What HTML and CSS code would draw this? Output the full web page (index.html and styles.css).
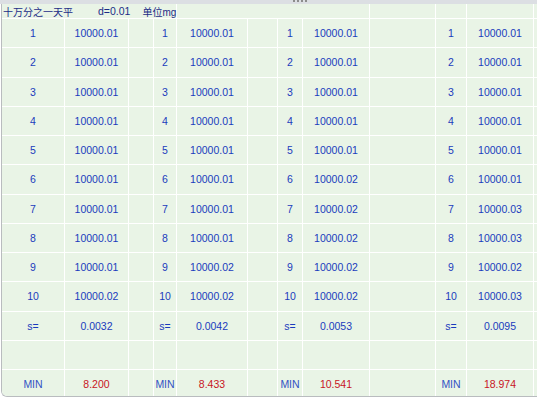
FILE: index.html
```html
<!DOCTYPE html>
<html>
<head>
<meta charset="utf-8">
<link rel="stylesheet" href="styles.css">
</head>
<body>
<div class="topbar"><div class="grip"><i></i><i></i><i></i><i></i></div></div>
<div class="sheet">
  <div class="c title span4"><span>十万分之一天平</span><span class="d">d=0.01</span><span class="u">单位mg</span></div>
  <div class="c span4"></div><div class="c"></div><div class="c"></div><div class="c"></div><div class="c"></div>

  <div class="c">1</div><div class="c">10000.01</div><div class="c"></div><div class="c">1</div><div class="c">10000.01</div><div class="c"></div><div class="c">1</div><div class="c">10000.01</div><div class="c"></div><div class="c">1</div><div class="c">10000.01</div><div class="c"></div>
  <div class="c">2</div><div class="c">10000.01</div><div class="c"></div><div class="c">2</div><div class="c">10000.01</div><div class="c"></div><div class="c">2</div><div class="c">10000.01</div><div class="c"></div><div class="c">2</div><div class="c">10000.01</div><div class="c"></div>
  <div class="c">3</div><div class="c">10000.01</div><div class="c"></div><div class="c">3</div><div class="c">10000.01</div><div class="c"></div><div class="c">3</div><div class="c">10000.01</div><div class="c"></div><div class="c">3</div><div class="c">10000.01</div><div class="c"></div>
  <div class="c">4</div><div class="c">10000.01</div><div class="c"></div><div class="c">4</div><div class="c">10000.01</div><div class="c"></div><div class="c">4</div><div class="c">10000.01</div><div class="c"></div><div class="c">4</div><div class="c">10000.01</div><div class="c"></div>
  <div class="c">5</div><div class="c">10000.01</div><div class="c"></div><div class="c">5</div><div class="c">10000.01</div><div class="c"></div><div class="c">5</div><div class="c">10000.01</div><div class="c"></div><div class="c">5</div><div class="c">10000.01</div><div class="c"></div>
  <div class="c">6</div><div class="c">10000.01</div><div class="c"></div><div class="c">6</div><div class="c">10000.01</div><div class="c"></div><div class="c">6</div><div class="c">10000.02</div><div class="c"></div><div class="c">6</div><div class="c">10000.01</div><div class="c"></div>
  <div class="c">7</div><div class="c">10000.01</div><div class="c"></div><div class="c">7</div><div class="c">10000.01</div><div class="c"></div><div class="c">7</div><div class="c">10000.02</div><div class="c"></div><div class="c">7</div><div class="c">10000.03</div><div class="c"></div>
  <div class="c">8</div><div class="c">10000.01</div><div class="c"></div><div class="c">8</div><div class="c">10000.01</div><div class="c"></div><div class="c">8</div><div class="c">10000.02</div><div class="c"></div><div class="c">8</div><div class="c">10000.03</div><div class="c"></div>
  <div class="c">9</div><div class="c">10000.01</div><div class="c"></div><div class="c">9</div><div class="c">10000.02</div><div class="c"></div><div class="c">9</div><div class="c">10000.02</div><div class="c"></div><div class="c">9</div><div class="c">10000.02</div><div class="c"></div>
  <div class="c">10</div><div class="c">10000.02</div><div class="c"></div><div class="c">10</div><div class="c">10000.02</div><div class="c"></div><div class="c">10</div><div class="c">10000.02</div><div class="c"></div><div class="c">10</div><div class="c">10000.03</div><div class="c"></div>
  <div class="c">s=</div><div class="c">0.0032</div><div class="c"></div><div class="c">s=</div><div class="c">0.0042</div><div class="c"></div><div class="c">s=</div><div class="c">0.0053</div><div class="c"></div><div class="c">s=</div><div class="c">0.0095</div><div class="c"></div>
  <div class="c"></div><div class="c"></div><div class="c"></div><div class="c"></div><div class="c"></div><div class="c"></div><div class="c"></div><div class="c"></div><div class="c"></div><div class="c"></div><div class="c"></div><div class="c"></div>
  <div class="c lbl">MIN</div><div class="c red">8.200</div><div class="c"></div><div class="c lbl">MIN</div><div class="c red">8.433</div><div class="c"></div><div class="c lbl">MIN</div><div class="c red">10.541</div><div class="c"></div><div class="c lbl">MIN</div><div class="c red">18.974</div><div class="c"></div>
</div>
</body>
</html>
```
FILE: styles.css
```css
html, body {
  margin: 0;
  padding: 0;
  width: 537px;
  height: 397px;
  overflow: hidden;
  background: #ffffff;
}
.topbar {
  height: 4px;
  background: #dcdfe3;
  display: flex;
  align-items: flex-start;
}
.grip {
  margin-left: 293px;
  display: flex;
  gap: 2px;
}
.grip i {
  display: block;
  width: 2px;
  height: 2px;
  background: #8c8c8c;
}
.sheet {
  margin-left: 1px;
  border-left: 1px solid #b9bcbf;
  border-bottom: 1px solid #b9bcbf;
  border-bottom-left-radius: 6px;
  overflow: hidden;
  height: 392px;
  background: #ffffff;
  display: grid;
  grid-template-columns: 62px 63px 24px 22px 70px 29px 24px 66px 65px 30px 66px 1fr;
  grid-template-rows: 14px repeat(13, 28.25px);
  gap: 1px;
  font-family: "Liberation Sans", Arial, sans-serif;
  font-size: 10.5px;
  color: #1a3bbd;
}
.c {
  background: #e9f4e6;
  display: flex;
  align-items: center;
  justify-content: center;
  white-space: nowrap;
}
.span4 {
  grid-column: span 4;
}
.title {
  position: relative;
  z-index: 1;
  justify-content: flex-start;
  padding-left: 1px;
  font-family: "Liberation Sans", "Noto Sans CJK SC", sans-serif;
  font-size: 10px;
  color: #1b2c86;
}
.title .d { margin-left: 25px; font-size: 10.5px; }
.title .u { margin-left: 12px; }
.lbl { color: #3352c4; }
.red { color: #c8141e; }
```
